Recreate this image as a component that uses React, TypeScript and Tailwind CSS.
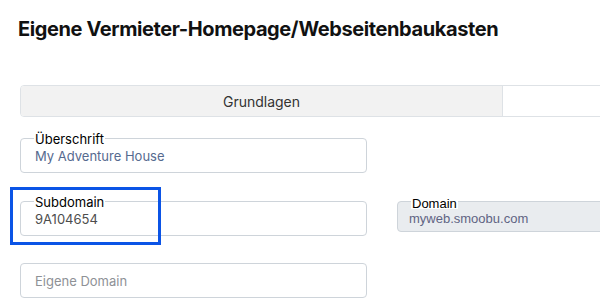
import React from "react";

function Field({ label, value, valueClass }: { label?: string; value: string; valueClass: string }) {
  return (
    <div className="relative shrink-0 w-[347px] h-[35px] border border-[#ced4da] rounded-[4px] flex items-center pl-[14px]">
      {label && (
        <span className="absolute left-[13px] top-[-8px] bg-white px-[1px] text-[13px] leading-[16px] text-black">
          {label}
        </span>
      )}
      <span className={"text-[13px] leading-[16px] " + valueClass}>{value}</span>
    </div>
  );
}

export default function App() {
  return (
    <div className="relative w-[600px] h-[301px] overflow-hidden bg-white font-['Inter',sans-serif]">
      <h1 className="pl-[18px] pt-[17px] text-[20px] leading-[24px] font-bold text-[#111] whitespace-nowrap tracking-[-0.4px]">
        Eigene Vermieter-Homepage/Webseitenbaukasten
      </h1>

      <div className="mt-[44px] ml-[20px] flex w-[966px] h-[32px] border border-[#dee2e6] rounded-[4px] overflow-hidden">
        <div className="w-[482px] bg-[#f2f2f2] border-r border-[#dee2e6] flex items-center justify-center text-[14px] text-[#333]">
          Grundlagen
        </div>
        <div className="flex-1 bg-white" />
      </div>

      <div className="mt-[21px] ml-[20px] flex flex-col gap-[28px]">
        <Field label="Überschrift" value="My Adventure House" valueClass="text-[#566a8f]" />
        <div className="flex gap-[30px]">
          <Field label="Subdomain" value="9A104654" valueClass="text-[#4d4d4d]" />
          <div className="relative shrink-0 w-[400px] h-[31px] border border-[#ced4da] rounded-[4px] bg-[#e9ecef] pl-[11px] pt-[9px] font-['Liberation_Sans',Arial,sans-serif]">
            <span className="absolute left-[13px] top-[-3px] bg-white px-[1px] text-[13px] leading-[10px] text-black">
              Domain
            </span>
            <div className="text-[13px] leading-[16px] text-[#5f6483]">myweb.smoobu.com</div>
          </div>
        </div>
        <div className="-mt-px">
          <Field value="Eigene Domain" valueClass="text-[#8e9196]" />
        </div>
      </div>

      <div className="absolute left-[10px] top-[187px] w-[151px] h-[58px] border-[3px] border-[#0b54e6]" />
    </div>
  );
}
